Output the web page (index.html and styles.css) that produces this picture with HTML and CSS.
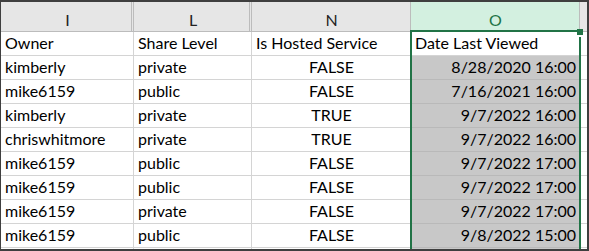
FILE: index.html
```html
<!DOCTYPE html>
<html>
<head>
<meta charset="utf-8">
<link rel="stylesheet" href="styles.css">
</head>
<body>
<div class="frame">
  <div class="sheet">
    <div class="c hdr gap">I</div>
    <div class="c hdr gap">L</div>
    <div class="c hdr">N</div>
    <div class="c hdr sel">O</div>
    <div class="c hdr last"></div>

    <div class="c">Owner</div>
    <div class="c">Share Level</div>
    <div class="c">Is Hosted Service</div>
    <div class="c">Date Last Viewed</div>
    <div class="c last"></div>

    <div class="c">kimberly</div>
    <div class="c">private</div>
    <div class="c ctr">FALSE</div>
    <div class="c rt fill">8/28/2020 16:00</div>
    <div class="c last"></div>

    <div class="c">mike6159</div>
    <div class="c">public</div>
    <div class="c ctr">FALSE</div>
    <div class="c rt fill">7/16/2021 16:00</div>
    <div class="c last"></div>

    <div class="c">kimberly</div>
    <div class="c">private</div>
    <div class="c ctr">TRUE</div>
    <div class="c rt fill">9/7/2022 16:00</div>
    <div class="c last"></div>

    <div class="c">chriswhitmore</div>
    <div class="c">private</div>
    <div class="c ctr">TRUE</div>
    <div class="c rt fill">9/7/2022 16:00</div>
    <div class="c last"></div>

    <div class="c">mike6159</div>
    <div class="c">public</div>
    <div class="c ctr">FALSE</div>
    <div class="c rt fill">9/7/2022 17:00</div>
    <div class="c last"></div>

    <div class="c">mike6159</div>
    <div class="c">public</div>
    <div class="c ctr">FALSE</div>
    <div class="c rt fill">9/7/2022 17:00</div>
    <div class="c last"></div>

    <div class="c">mike6159</div>
    <div class="c">private</div>
    <div class="c ctr">FALSE</div>
    <div class="c rt fill">9/7/2022 17:00</div>
    <div class="c last"></div>

    <div class="c">mike6159</div>
    <div class="c">public</div>
    <div class="c ctr">FALSE</div>
    <div class="c rt fill">9/8/2022 15:00</div>
    <div class="c last"></div>

    <div class="c"></div>
    <div class="c"></div>
    <div class="c"></div>
    <div class="c fill"></div>
    <div class="c last"></div>
  </div>
  <div class="selection"></div>
  <div class="handle"></div>
</div>
</body>
</html>
```
FILE: styles.css
```css
html, body {
  margin: 0;
  padding: 0;
  background: #fff;
}
.frame {
  position: relative;
  width: 589px;
  height: 251px;
  box-sizing: border-box;
  border-style: solid;
  border-color: #3f3f3f;
  border-width: 2px 2px 2px 1px;
  overflow: hidden;
  font-family: Lato, "Open Sans", sans-serif;
  font-size: 16px;
  color: #000;
}
.sheet {
  display: grid;
  grid-template-columns: 133px 118px 159px 169px 7px;
  grid-template-rows: 30px;
  grid-auto-rows: 24px;
}
.c {
  position: relative;
  box-sizing: border-box;
  border-right: 1px solid #d4d4d4;
  border-bottom: 1px solid #d4d4d4;
  padding: 0 3px 2px 4px;
  display: flex;
  align-items: flex-end;
  line-height: 20px;
  white-space: nowrap;
  overflow: hidden;
}
.c.last {
  border-right: none;
}
.ctr {
  justify-content: center;
}
.rt {
  justify-content: flex-end;
}
.fill {
  background: #c8c8c8;
  border-bottom-color: #b9b9b9;
}
.hdr {
  background: #e6e6e6;
  border-right-color: #bcbcbc;
  border-bottom-color: #bcbcbc;
  justify-content: center;
  color: #222;
  padding-bottom: 1px;
}
.hdr.gap::after {
  content: "";
  position: absolute;
  top: 0;
  bottom: 0;
  right: 1px;
  width: 1px;
  background: #bcbcbc;
}
.hdr.sel {
  background: #d3f0e0;
  color: #217346;
}
.selection {
  position: absolute;
  left: 409px;
  top: 28px;
  width: 171px;
  height: 260px;
  box-sizing: border-box;
  border: 2px solid #217346;
}
.handle {
  position: absolute;
  left: 576px;
  top: 27px;
  width: 6px;
  height: 6px;
  background: #217346;
  box-shadow: 0 2px 0 #fff;
}
```
